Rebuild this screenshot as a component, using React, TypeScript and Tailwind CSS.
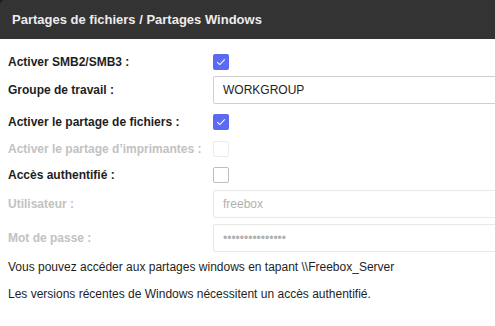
import React from "react";

const font = { fontFamily: '"Liberation Sans", Arial, sans-serif' };

function Check({ checked, disabled }: { checked?: boolean; disabled?: boolean }) {
  if (checked) {
    return (
      <span className="flex h-4 w-4 items-center justify-center rounded-[2px] bg-[#5b6af0]">
        <svg width="10" height="8" viewBox="0 0 10 8" fill="none">
          <path d="M1.2 4.2 L3.8 6.6 L8.8 1.4" stroke="#fff" strokeWidth="1.1" />
        </svg>
      </span>
    );
  }
  return (
    <span
      className={
        disabled
          ? "block h-4 w-4 rounded-[2px] border-[1.5px] border-[#ececec]"
          : "block h-4 w-4 rounded-[2px] border-[1.5px] border-[#bdbdbd]"
      }
    />
  );
}

function Field({ value, disabled }: { value: string; disabled?: boolean }) {
  return (
    <div
      className={
        disabled
          ? "flex h-[28px] w-[320px] shrink-0 items-center rounded-[2px] border border-[#e8e8e8] px-[9px] text-[12px] text-[#b0b0b0]"
          : "flex h-[28px] w-[320px] shrink-0 items-center rounded-[2px] border border-[#cfcfcf] px-[9px] text-[12px] text-[#222]"
      }
    >
      {value}
    </div>
  );
}

function Row({
  label,
  disabled,
  className,
  children,
}: {
  label: string;
  disabled?: boolean;
  className: string;
  children: React.ReactNode;
}) {
  return (
    <div className={"flex items-center " + className}>
      <span
        className={
          disabled
            ? "w-[213px] shrink-0 pl-2 text-[12px] leading-4 font-bold text-[#c2c2c2]"
            : "w-[213px] shrink-0 pl-2 text-[12px] leading-4 font-bold text-[#1e1e1e]"
        }
      >
        {label}
      </span>
      {children}
    </div>
  );
}

export default function App() {
  return (
    <div className="h-[326px] w-[495px] overflow-hidden bg-white" style={font}>
      <div className="bg-[#1c1c1c]">
        <div className="flex h-[39px] items-center rounded-tl-[5px] bg-[#333333] pl-3 text-[13px] font-bold text-[#ececec]">
          Partages de fichiers / Partages Windows
        </div>
      </div>

      <div className="flex flex-col pt-[15px]">
        <Row label="Activer SMB2/SMB3 :" className="">
          <Check checked />
        </Row>
        <Row label="Groupe de travail :" className="mt-[6px]">
          <Field value="WORKGROUP" />
        </Row>
        <Row label="Activer le partage de fichiers :" className="mt-[10px]">
          <Check checked />
        </Row>
        <Row label="Activer le partage d’imprimantes :" disabled className="mt-[11px]">
          <Check disabled />
        </Row>
        <Row label="Accès authentifié :" className="mt-[10px]">
          <Check />
        </Row>
        <Row label="Utilisateur :" disabled className="mt-[7px]">
          <Field value="freebox" disabled />
        </Row>
        <Row label="Mot de passe :" disabled className="mt-[6px]">
          <Field value="•••••••••••••••" disabled />
        </Row>

        <p className="mt-[7px] pl-2 text-[12px] leading-4 text-[#1e1e1e]">
          Vous pouvez accéder aux partages windows en tapant \\Freebox_Server
        </p>
        <p className="mt-[11px] pl-2 text-[12px] leading-4 text-[#1e1e1e]">
          Les versions récentes de Windows nécessitent un accès authentifié.
        </p>
      </div>
    </div>
  );
}
